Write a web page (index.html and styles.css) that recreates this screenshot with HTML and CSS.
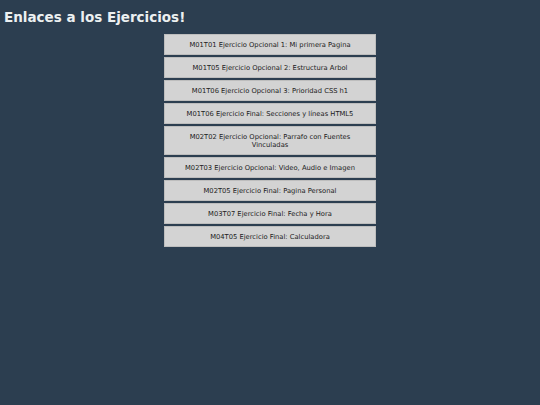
FILE: index.html
```html
<!DOCTYPE html>
<html lang="es">
<head>
<meta charset="utf-8">
<title>Enlaces a los Ejercicios</title>
<link rel="stylesheet" href="styles.css">
</head>
<body>
<h1 class="title">Enlaces a los Ejercicios!</h1>
<nav class="links">
  <a class="link" href="#">M01T01 Ejercicio Opcional 1: Mi primera Pagina</a>
  <a class="link" href="#">M01T05 Ejercicio Opcional 2: Estructura Arbol</a>
  <a class="link" href="#">M01T06 Ejercicio Opcional 3: Prioridad CSS h1</a>
  <a class="link" href="#">M01T06 Ejercicio Final: Secciones y líneas HTML5</a>
  <a class="link" href="#">M02T02 Ejercicio Opcional: Parrafo con Fuentes Vinculadas</a>
  <a class="link" href="#">M02T03 Ejercicio Opcional: Video, Audio e Imagen</a>
  <a class="link" href="#">M02T05 Ejercicio Final: Pagina Personal</a>
  <a class="link" href="#">M03T07 Ejercicio Final: Fecha y Hora</a>
  <a class="link" href="#">M04T05 Ejercicio Final: Calculadora</a>
</nav>
</body>
</html>
```
FILE: styles.css
```css
html, body {
  margin: 0;
  padding: 0;
  background: #2c3e50;
  height: 100%;
}
body {
  font-family: "DejaVu Sans", Verdana, sans-serif;
}
.title {
  margin: 0;
  padding: 9px 4px 0;
  font-size: 13.5px;
  line-height: 17px;
  font-weight: bold;
  color: #ecf0f1;
}
.links {
  display: flex;
  flex-direction: column;
  gap: 2px;
  width: 212px;
  margin: 8px auto 0;
}
.link {
  display: block;
  box-sizing: border-box;
  background: #d3d3d3;
  border: 1px solid #bdbdbd;
  color: #222;
  text-decoration: none;
  text-align: center;
  font-size: 6.75px;
  line-height: 8px;
  padding: 6px 10px 5px;
}
```
